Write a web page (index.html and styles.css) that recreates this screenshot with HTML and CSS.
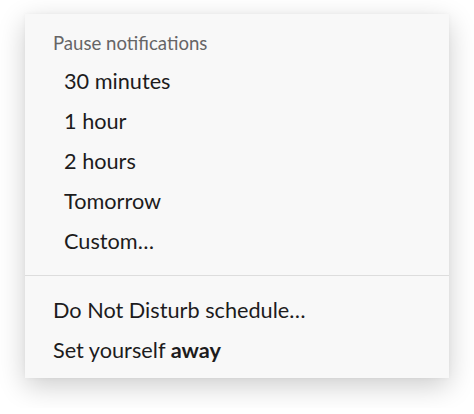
FILE: index.html
```html
<!DOCTYPE html>
<html>
<head>
<meta charset="utf-8">
<link rel="stylesheet" href="styles.css">
</head>
<body>
<div class="menu">
  <div class="section">
    <div class="header">Pause notifications</div>
    <div class="item sub">30 minutes</div>
    <div class="item sub">1 hour</div>
    <div class="item sub">2 hours</div>
    <div class="item sub">Tomorrow</div>
    <div class="item sub">Custom…</div>
  </div>
  <div class="divider"></div>
  <div class="section lower">
    <div class="item">Do Not Disturb schedule…</div>
    <div class="item">Set yourself <b>away</b></div>
  </div>
</div>
</body>
</html>
```

FILE: styles.css
```css
html, body {
  margin: 0;
  padding: 0;
  background: #ffffff;
}
body {
  font-family: Lato, "Open Sans", sans-serif;
  color: #1d1c1d;
  padding-bottom: 30px;
}
.menu {
  margin: 14px 0 0 25px;
  width: 424px;
  height: 364px;
  box-sizing: border-box;
  background: #f8f8f8;
  box-shadow: 0 8px 26px rgba(0, 0, 0, 0.2), 0 0 4px rgba(0, 0, 0, 0.04);
  padding-top: 15px;
}
.section {
  display: flex;
  flex-direction: column;
}
.header {
  padding-left: 28px;
  height: 28px;
  line-height: 28px;
  font-size: 18.6px;
  color: #666566;
  margin-bottom: 4px;
}
.item {
  height: 40px;
  line-height: 40px;
  font-size: 21.7px;
  padding-left: 28px;
  white-space: nowrap;
}
.item.sub {
  padding-left: 39px;
}
.item b {
  font-weight: 700;
}
.divider {
  height: 1px;
  background: #dddddd;
  margin: 14px 0 14px;
}
```
